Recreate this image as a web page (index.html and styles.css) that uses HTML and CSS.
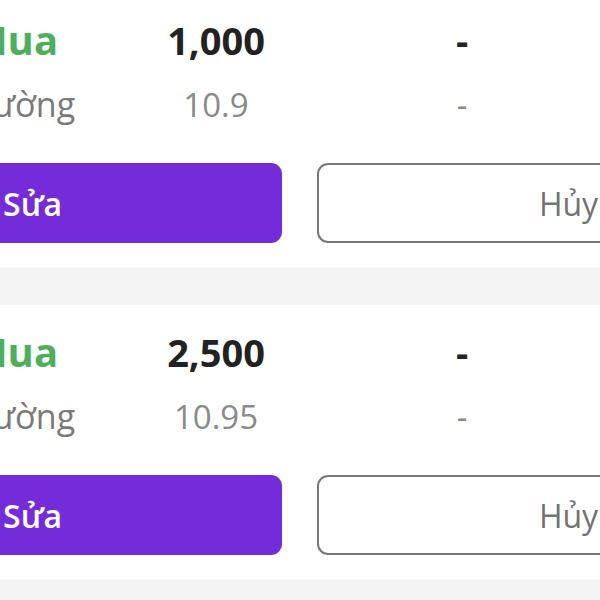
FILE: index.html
```html
<!DOCTYPE html>
<html lang="vi">
<head>
<meta charset="utf-8">
<title>Lệnh đặt</title>
<link rel="stylesheet" href="styles.css">
</head>
<body>
<div class="list">
  <section class="order">
    <div class="info">
      <div class="cell label buy">Mua</div>
      <div class="cell value strong">1,000</div>
      <div class="cell value strong">-</div>
      <div class="cell label muted">Thường</div>
      <div class="cell value light">10.9</div>
      <div class="cell value light">-</div>
    </div>
    <div class="actions">
      <button class="btn btn-primary">Sửa</button>
      <button class="btn btn-outline">Hủy</button>
    </div>
  </section>
  <div class="divider"></div>
  <section class="order">
    <div class="info">
      <div class="cell label buy">Mua</div>
      <div class="cell value strong">2,500</div>
      <div class="cell value strong">-</div>
      <div class="cell label muted">Thường</div>
      <div class="cell value light">10.95</div>
      <div class="cell value light">-</div>
    </div>
    <div class="actions">
      <button class="btn btn-primary">Sửa</button>
      <button class="btn btn-outline">Hủy</button>
    </div>
  </section>
  <div class="divider"></div>
</div>
</body>
</html>
```

FILE: styles.css
```css
html, body {
  margin: 0;
  padding: 0;
  background: #ffffff;
  overflow: hidden;
}

body {
  font-family: "Open Sans", "Noto Sans", sans-serif;
}

.list {
  width: 1101px;
  margin-left: -249px;
  margin-top: -7px;
}

.order {
  background: #ffffff;
  padding: 21px 32px 24px;
}

.info {
  display: grid;
  grid-template-columns: 158px 246px 246px;
  padding-left: 152px;
  row-gap: 16px;
}

.cell {
  text-align: center;
  white-space: nowrap;
}

.label.buy {
  color: #4cb05a;
  font-size: 40px;
  line-height: 52px;
  font-weight: 700;
}

.label.muted {
  color: #7a7a7a;
  font-size: 34px;
  line-height: 45px;
  font-weight: 400;
}

.value.strong {
  color: #222222;
  font-size: 38px;
  line-height: 52px;
  font-weight: 700;
}

.value.light {
  color: #8a8a8a;
  font-size: 33px;
  line-height: 45px;
  font-weight: 400;
}

.actions {
  display: flex;
  gap: 35px;
  margin-top: 36px;
}

.btn {
  flex: 1;
  height: 80px;
  border-radius: 11px;
  font-family: inherit;
  font-size: 32px;
  display: flex;
  align-items: center;
  justify-content: center;
  padding: 0;
  box-sizing: border-box;
}

.btn-primary {
  background: #742bd9;
  color: #ffffff;
  border: none;
  font-weight: 600;
}

.btn-outline {
  background: #ffffff;
  color: #737373;
  border: 2px solid #767676;
  font-weight: 500;
}

.divider {
  height: 38px;
  background: #f4f4f4;
}
```
